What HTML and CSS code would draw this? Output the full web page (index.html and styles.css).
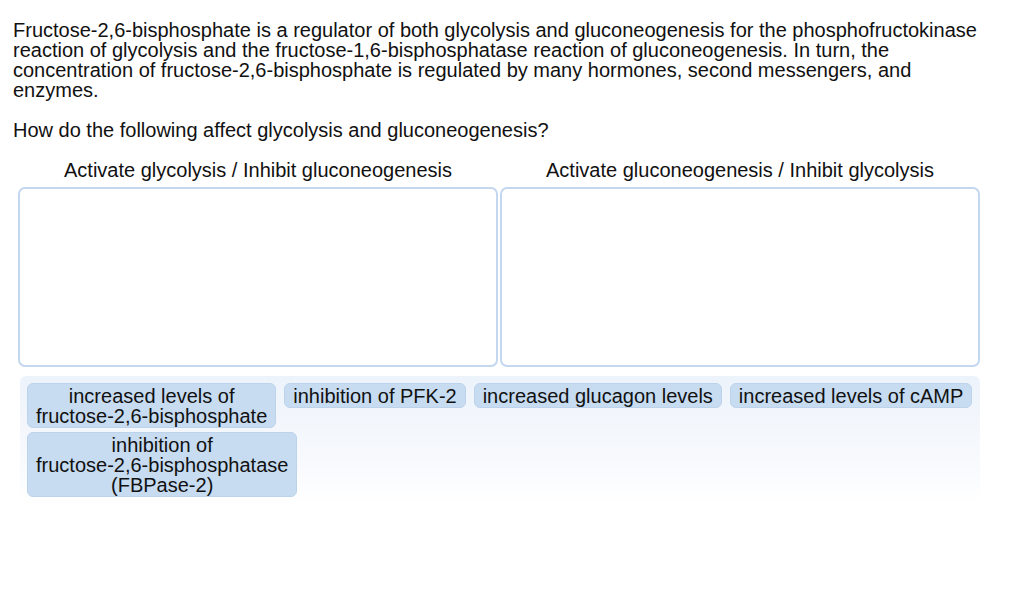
FILE: index.html
```html
<!DOCTYPE html>
<html lang="en">
<head>
<meta charset="utf-8">
<title>Fructose-2,6-bisphosphate</title>
<link rel="stylesheet" href="styles.css">
</head>
<body>
<div class="question">
  <p class="intro">Fructose-2,6-bisphosphate is a regulator of both glycolysis and gluconeogenesis for the phosphofructokinase reaction of glycolysis and the fructose-1,6-bisphosphatase reaction of gluconeogenesis. In turn, the concentration of fructose-2,6-bisphosphate is regulated by many hormones, second messengers, and enzymes.</p>
  <p class="prompt">How do the following affect glycolysis and gluconeogenesis?</p>

  <div class="bins">
    <div class="bin">
      <div class="bin-title">Activate glycolysis / Inhibit gluconeogenesis</div>
      <div class="bin-drop"></div>
    </div>
    <div class="bin">
      <div class="bin-title">Activate gluconeogenesis / Inhibit glycolysis</div>
      <div class="bin-drop"></div>
    </div>
  </div>

  <div class="pool">
    <div class="chip">increased levels of<br>fructose-2,6-bisphosphate</div>
    <div class="chip">inhibition of PFK-2</div>
    <div class="chip">increased glucagon levels</div>
    <div class="chip">increased levels of cAMP</div>
    <div class="chip">inhibition of<br>fructose-2,6-bisphosphatase<br>(FBPase-2)</div>
  </div>
</div>
</body>
</html>
```

FILE: styles.css
```css
html, body {
  margin: 0;
  padding: 0;
  background: #ffffff;
}

body {
  font-family: "Liberation Sans", Arial, sans-serif;
  color: #111111;
  font-size: 20px;
  line-height: 20px;
}

.question {
  padding: 20px 0 0 13px;
}

.intro {
  margin: 0;
  width: 978px;
}

.prompt {
  margin: 20px 0 0 0;
}

.bins {
  display: flex;
  gap: 2px;
  width: 962px;
  margin: 20px 0 0 5px;
}

.bin {
  flex: 0 0 480px;
  display: flex;
  flex-direction: column;
}

.bin-title {
  text-align: center;
  height: 27px;
}

.bin-drop {
  height: 176px;
  border: 2px solid #c3d8ef;
  border-radius: 7px;
  background: #ffffff;
}

.pool {
  box-sizing: border-box;
  width: 960px;
  margin: 9px 0 0 7px;
  padding: 7px;
  min-height: 124px;
  border-radius: 6px;
  background: linear-gradient(to bottom, #edf3fb 0%, #f8fafd 70%, #ffffff 100%);
  display: flex;
  flex-wrap: wrap;
  align-items: flex-start;
  gap: 4px 8px;
}

.chip {
  background: #c7dcf1;
  border: 1px solid #bdd3ec;
  border-radius: 6px;
  padding: 2px 8px 1px;
  text-align: center;
  color: #111111;
}
```
